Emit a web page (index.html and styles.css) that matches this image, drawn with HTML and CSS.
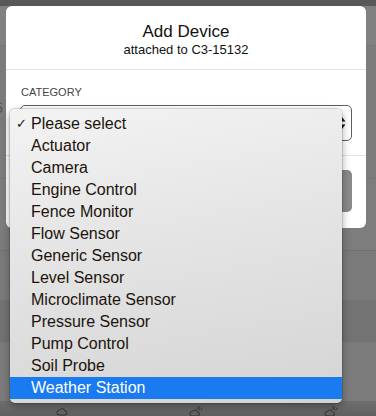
FILE: index.html
```html
<!DOCTYPE html>
<html lang="en">
<head>
  <meta charset="UTF-8" />
  <title>Add Device</title>
  <link rel="stylesheet" href="styles.css">
</head>
<body>

  <div class="backdrop">
    <div class="band top-strip"></div>
    <div class="band band-a"></div>
    <div class="band band-b"><span class="stray">5</span></div>
    <div class="band band-c"></div>
    <div class="band band-d"></div>
    <div class="band band-e"></div>
    <div class="band band-f"></div>
    <div class="band forecast">
      <svg class="wx" width="12" height="12" viewBox="0 0 12 12"><path d="M3 10h6a2 2 0 0 0 0-4 3 3 0 0 0-5.6-0.6A2.3 2.3 0 0 0 3 10z" fill="none" stroke="#333" stroke-width="1"/></svg>
      <svg class="wx" width="14" height="12" viewBox="0 0 14 12"><path d="M3 11h5.5a2 2 0 0 0 0-4 3 3 0 0 0-5.3-0.5A2.2 2.2 0 0 0 3 11z" fill="none" stroke="#333" stroke-width="1"/><path d="M9 1v1.5M12 4h1.5M11.4 1.6l-1 1M8 4.5a1.6 1.6 0 0 1 3 0.8" fill="none" stroke="#333" stroke-width="1"/></svg>
      <svg class="wx" width="14" height="12" viewBox="0 0 14 12"><path d="M3 11h5.5a2 2 0 0 0 0-4 3 3 0 0 0-5.3-0.5A2.2 2.2 0 0 0 3 11z" fill="none" stroke="#333" stroke-width="1"/><path d="M9 1v1.5M12 4h1.5M11.4 1.6l-1 1M8 4.5a1.6 1.6 0 0 1 3 0.8" fill="none" stroke="#333" stroke-width="1"/></svg>
    </div>
  </div>

  <div class="modal">
    <div class="modal-header">
      <h2>Add Device</h2>
      <p>attached to C3-15132</p>
    </div>
    <div class="modal-body">
      <label class="field-label">CATEGORY</label>
      <div class="select-box">
        <svg class="arrows" width="8" height="14" viewBox="0 0 8 14">
          <path d="M4 1L7.5 5.5H0.5z M4 13L7.5 8.5H0.5z" fill="#111"/>
        </svg>
      </div>
    </div>
    <div class="modal-footer">
      <div class="btn"></div>
    </div>
  </div>

  <ul class="menu">
    <li class="checked">Please select</li>
    <li>Actuator</li>
    <li>Camera</li>
    <li>Engine Control</li>
    <li>Fence Monitor</li>
    <li>Flow Sensor</li>
    <li>Generic Sensor</li>
    <li>Level Sensor</li>
    <li>Microclimate Sensor</li>
    <li>Pressure Sensor</li>
    <li>Pump Control</li>
    <li>Soil Probe</li>
    <li class="hover">Weather Station</li>
  </ul>

</body>
</html>
```

FILE: styles.css
```css
body {
  font-family: 'Liberation Sans', Arial, sans-serif;
  margin: 0;
  padding: 0;
  width: 376px;
  height: 416px;
  overflow: hidden;
  position: relative;
  background: #7b7b7b;
  color: #222;
}

.backdrop {
  display: flex;
  flex-direction: column;
  height: 416px;
}

.band {
  background: #7c7c7c;
}

.top-strip {
  height: 6px;
  background: #585858;
}

.band-a {
  height: 39px;
  background: #818181;
}

.band-b {
  height: 132px;
  border-top: 1px solid #767676;
  position: relative;
}

.stray {
  position: absolute;
  left: -5px;
  top: 54px;
  font-size: 14px;
  color: #555;
}

.band-c {
  height: 71px;
  border-top: 1px solid #747474;
  background: #7d7d7d;
}

.band-d {
  height: 49px;
  border-top: 1px solid #717171;
  background: #7b7b7b;
}

.band-e {
  height: 42px;
  background: #737373;
}

.band-f {
  height: 59px;
  background: #7c7c7c;
}

.forecast {
  flex: 1;
  background: linear-gradient(#6f6f6f, #606060);
  display: flex;
  align-items: flex-end;
  gap: 121px;
  padding-left: 56px;
}

.wx {
  display: block;
  margin-bottom: -1px;
}

.modal {
  position: absolute;
  left: 6px;
  top: 6px;
  width: 360px;
  height: 222px;
  background: #fff;
  border-radius: 6px;
  overflow: hidden;
}

.modal-header {
  text-align: center;
  padding: 16px 0 11px;
  border-bottom: 1px solid #e3e3e3;
}

.modal-header h2 {
  margin: 0;
  font-size: 17px;
  font-weight: normal;
  line-height: 20px;
  color: #111;
}

.modal-header p {
  margin: 0;
  font-size: 13px;
  line-height: 16px;
  color: #111;
}

.modal-body {
  padding: 15px 14px 14px;
  border-bottom: 1px solid #e3e3e3;
}

.field-label {
  display: block;
  font-size: 11px;
  line-height: 14px;
  color: #444;
  margin: 0 0 6px 1px;
}

.select-box {
  height: 34px;
  border: 1px solid #5e5e5e;
  border-radius: 5px;
  background: #fff;
  display: flex;
  justify-content: flex-end;
  align-items: center;
  padding-right: 5px;
}

.modal-footer {
  padding: 14px 14px 15px;
}

.btn {
  height: 42px;
  background: #8a8a8a;
  border-radius: 5px;
}

.menu {
  position: absolute;
  left: 10px;
  top: 109px;
  width: 332px;
  margin: 0;
  padding: 4px 0;
  list-style: none;
  border-radius: 5px;
  background: linear-gradient(170deg, #f3f3f3, #e4e4e4 45%, #d4d4d4);
  box-shadow: 0 0 0 1px rgba(0, 0, 0, 0.12), 0 3px 8px rgba(0, 0, 0, 0.35);
}

.menu li {
  height: 22px;
  line-height: 22px;
  font-size: 16px;
  padding-left: 21px;
  color: #1c130b;
  position: relative;
}

.menu li.checked::before {
  content: '\2713';
  position: absolute;
  left: 6px;
  font-size: 13px;
}

.menu li.hover {
  background: #1a7bf0;
  color: #fff;
}
```
